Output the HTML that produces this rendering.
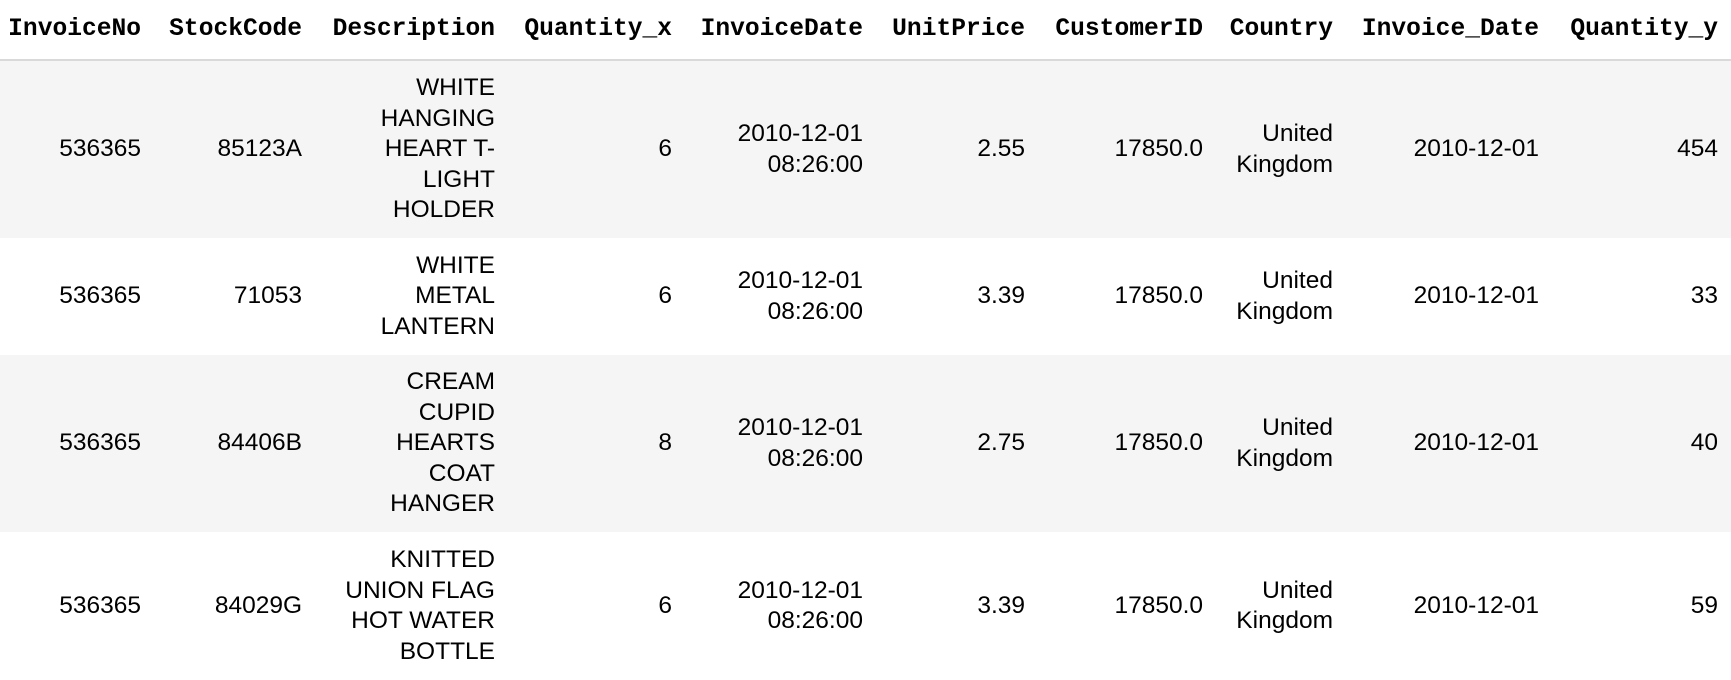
<!DOCTYPE html>
<html><head><meta charset="utf-8"><style>
html,body{margin:0;padding:0;background:#fff;}
body{width:1731px;height:673px;position:relative;overflow:hidden;color:#000;}
.row{position:absolute;left:0;width:1731px;}
.c{position:absolute;top:0;height:100%;display:flex;align-items:center;justify-content:flex-end;text-align:right;white-space:nowrap;font-family:"Liberation Sans",Arial,sans-serif;font-size:24.5px;line-height:30.5px;}
.h .c{font-family:"Liberation Mono","Courier New",monospace;font-weight:bold;font-size:24.6px;line-height:30px;}
.g{background:#f5f5f5;}
</style></head><body>
<div class="row h" style="top:0;height:59px;border-bottom:2px solid #d9d9d9;">
<div class="c" style="right:1590px">InvoiceNo</div>
<div class="c" style="right:1429px">StockCode</div>
<div class="c" style="right:1236px">Description</div>
<div class="c" style="right:1059px">Quantity_x</div>
<div class="c" style="right:868px">InvoiceDate</div>
<div class="c" style="right:706px">UnitPrice</div>
<div class="c" style="right:528px">CustomerID</div>
<div class="c" style="right:398px">Country</div>
<div class="c" style="right:192px">Invoice_Date</div>
<div class="c" style="right:13px">Quantity_y</div>
</div>

<div class="row g" style="top:61px;height:177px;">
<div class="c" style="right:1590px">536365</div>
<div class="c" style="right:1429px">85123A</div>
<div class="c" style="right:1236px">WHITE<br>HANGING<br>HEART T-<br>LIGHT<br>HOLDER</div>
<div class="c" style="right:1059px">6</div>
<div class="c" style="right:868px">2010-12-01<br>08:26:00</div>
<div class="c" style="right:706px">2.55</div>
<div class="c" style="right:528px">17850.0</div>
<div class="c" style="right:398px">United<br>Kingdom</div>
<div class="c" style="right:192px">2010-12-01</div>
<div class="c" style="right:13px">454</div>
</div>

<div class="row" style="top:238px;height:117px;">
<div class="c" style="right:1590px">536365</div>
<div class="c" style="right:1429px">71053</div>
<div class="c" style="right:1236px">WHITE<br>METAL<br>LANTERN</div>
<div class="c" style="right:1059px">6</div>
<div class="c" style="right:868px">2010-12-01<br>08:26:00</div>
<div class="c" style="right:706px">3.39</div>
<div class="c" style="right:528px">17850.0</div>
<div class="c" style="right:398px">United<br>Kingdom</div>
<div class="c" style="right:192px">2010-12-01</div>
<div class="c" style="right:13px">33</div>
</div>

<div class="row g" style="top:355px;height:177px;">
<div class="c" style="right:1590px">536365</div>
<div class="c" style="right:1429px">84406B</div>
<div class="c" style="right:1236px">CREAM<br>CUPID<br>HEARTS<br>COAT<br>HANGER</div>
<div class="c" style="right:1059px">8</div>
<div class="c" style="right:868px">2010-12-01<br>08:26:00</div>
<div class="c" style="right:706px">2.75</div>
<div class="c" style="right:528px">17850.0</div>
<div class="c" style="right:398px">United<br>Kingdom</div>
<div class="c" style="right:192px">2010-12-01</div>
<div class="c" style="right:13px">40</div>
</div>

<div class="row" style="top:532px;height:148px;">
<div class="c" style="right:1590px">536365</div>
<div class="c" style="right:1429px">84029G</div>
<div class="c" style="right:1236px">KNITTED<br>UNION FLAG<br>HOT WATER<br>BOTTLE</div>
<div class="c" style="right:1059px">6</div>
<div class="c" style="right:868px">2010-12-01<br>08:26:00</div>
<div class="c" style="right:706px">3.39</div>
<div class="c" style="right:528px">17850.0</div>
<div class="c" style="right:398px">United<br>Kingdom</div>
<div class="c" style="right:192px">2010-12-01</div>
<div class="c" style="right:13px">59</div>
</div>
</body></html>
